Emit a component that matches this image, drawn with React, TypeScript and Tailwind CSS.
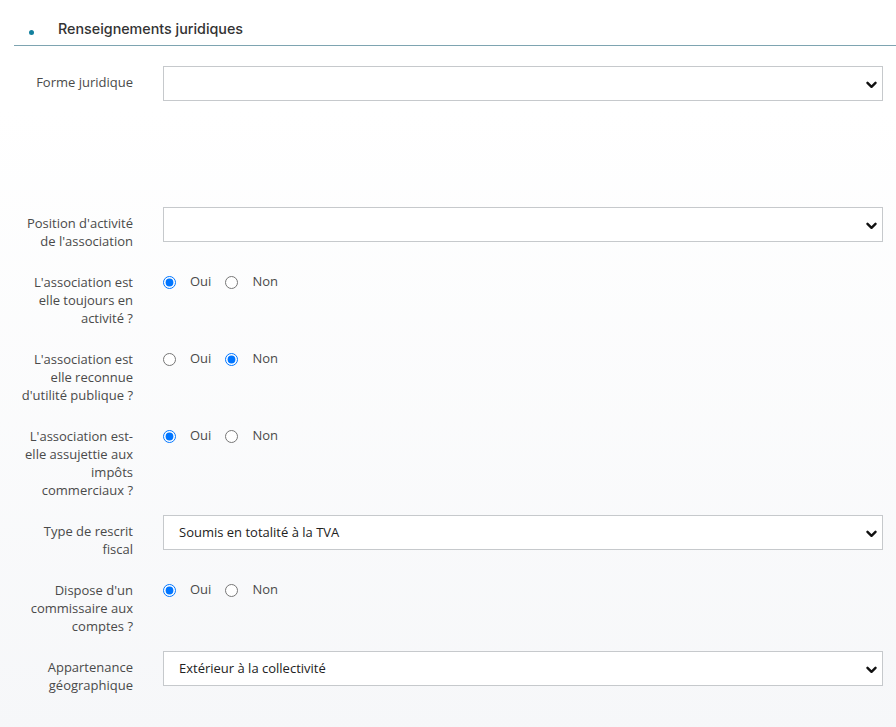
import React from 'react';

type Row =
  | { kind: 'select'; label: string[]; value?: string; gapBefore?: string }
  | { kind: 'radio'; label: string[]; checked: 'oui' | 'non'; name: string };

const rows: Row[] = [
  { kind: 'select', label: ['Forme juridique'] },
  { kind: 'select', label: ["Position d'activité", "de l'association"], gapBefore: 'mt-[90px]' },
  { kind: 'radio', name: 'activite', checked: 'oui', label: ["L'association est", 'elle toujours en', 'activité ?'] },
  { kind: 'radio', name: 'utilite', checked: 'non', label: ["L'association est", 'elle reconnue', "d'utilité publique ?"] },
  { kind: 'radio', name: 'impots', checked: 'oui', label: ["L'association est-", 'elle assujettie aux', 'impôts', 'commerciaux ?'] },
  { kind: 'select', label: ['Type de rescrit', 'fiscal'], value: 'Soumis en totalité à la TVA' },
  { kind: 'radio', name: 'commissaire', checked: 'oui', label: ["Dispose d'un", 'commissaire aux', 'comptes ?'] },
  { kind: 'select', label: ['Appartenance', 'géographique'], value: 'Extérieur à la collectivité' },
];

const Chevron = () => (
  <svg className="w-[11px] h-[8px]" viewBox="0 0 11 8" fill="none">
    <path d="M1.5 1.8L5.5 5.8L9.5 1.8" stroke="#111" strokeWidth={2.4} strokeLinecap="round" strokeLinejoin="round" />
  </svg>
);

const Label = ({ lines }: { lines: string[] }) => (
  <div className="w-[134px] shrink-0 pt-[7px] pr-px text-right text-[13px] leading-[18px] text-[#4a4a4a]">
    {lines.map((l, i) => (
      <div key={i}>{l}</div>
    ))}
  </div>
);

const App: React.FC = () => {
  return (
    <div
      className="min-h-screen w-[896px] bg-gradient-to-b from-white from-15% to-[#f6f7f9] pb-10"
      style={{ fontFamily: '"Open Sans", "Liberation Sans", sans-serif' }}
    >
      {/* Section header */}
      <div className="ml-[14px] pt-[17px] h-[46px] border-b border-[#7ea4b1] flex items-start">
        <span className="mt-[13px] ml-[15px] w-[5px] h-[5px] rounded-full bg-[#13809e]" />
        <h2
          className="ml-[24px] text-[14.3px] leading-[24px] font-medium text-[#333]"
          style={{ fontFamily: 'Inter, "Open Sans", sans-serif' }}
        >
          Renseignements juridiques
        </h2>
      </div>

      <div className="pt-[20px] flex flex-col gap-4">
        {rows.map((row, i) => (
          <div key={i} className={`flex items-start ${row.kind === 'select' && row.gapBefore ? row.gapBefore : ''}`}>
            <Label lines={row.label} />
            <div className="ml-[29px] flex-1 pr-[13px]">
              {row.kind === 'select' ? (
                <div className="relative h-[35px] border border-[#c6c9cc] bg-white flex items-center">
                  <span className="pl-[15px] text-[13px] text-[#222]">{row.value ?? ''}</span>
                  <span className="absolute right-[5px] top-[14px]">
                    <Chevron />
                  </span>
                </div>
              ) : (
                <div className="flex items-center h-[32px] text-[13px] text-[#4a4a4a]">
                  <label className="flex items-center">
                    <input
                      type="radio"
                      name={row.name}
                      defaultChecked={row.checked === 'oui'}
                      className="w-[13px] h-[13px]"
                    />
                    <span className="ml-[14px]">Oui</span>
                  </label>
                  <label className="flex items-center ml-[14px]">
                    <input
                      type="radio"
                      name={row.name}
                      defaultChecked={row.checked === 'non'}
                      className="w-[13px] h-[13px]"
                    />
                    <span className="ml-[14px]">Non</span>
                  </label>
                </div>
              )}
            </div>
          </div>
        ))}
      </div>
    </div>
  );
};

export default App;
